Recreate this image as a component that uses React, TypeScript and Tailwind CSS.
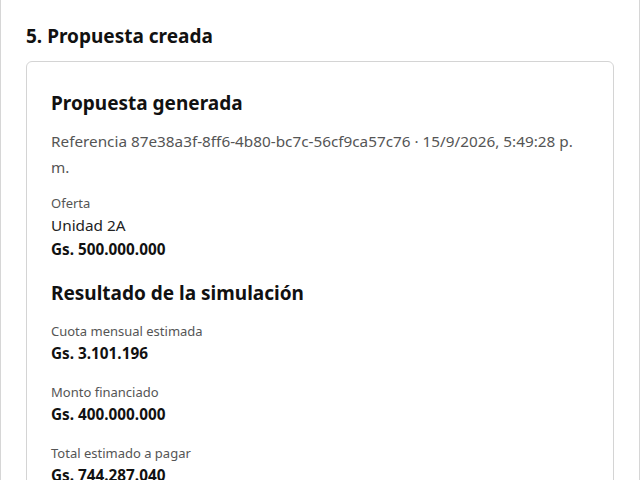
const Field = ({ label, value }: { label: string; value: string }) => (
  <div className="flex flex-col">
    <span className="text-[13px] leading-[20px] text-[#555]">{label}</span>
    <span className="text-[15.3px] leading-[24px] font-bold text-[#111]">{value}</span>
  </div>
);

export default function App() {
  return (
    <div
      className="min-h-[480px] bg-white border-x border-[#d6d6d6] px-[25px] pt-[22px]"
      style={{ fontFamily: '"Noto Sans", "Open Sans", sans-serif' }}
    >
      <h1 className="text-[19px] leading-[28px] font-bold text-[#111]">5. Propuesta creada</h1>

      <div className="mt-[11px] rounded-md border border-[#d4d4d4] px-[24px] pt-[27px] pb-6">
        <h2 className="text-[19px] leading-[28px] font-bold text-[#111]">Propuesta generada</h2>
        <p className="mt-[11px] text-[15.3px] leading-[26px] text-[#555]">
          Referencia 87e38a3f-8ff6-4b80-bc7c-56cf9ca57c76 · 15/9/2026, 5:49:28 p. m.
        </p>

        <div className="mt-[13px] flex flex-col">
          <span className="text-[13px] leading-[20px] text-[#555]">Oferta</span>
          <span className="text-[15.3px] leading-[24px] text-[#222]">Unidad 2A</span>
          <span className="text-[15.3px] leading-[24px] font-bold text-[#111]">Gs. 500.000.000</span>
        </div>

        <h2 className="mt-[18px] text-[19px] leading-[28px] font-bold text-[#111]">
          Resultado de la simulación
        </h2>

        <div className="mt-[14px] flex flex-col gap-[17px]">
          <Field label="Cuota mensual estimada" value="Gs. 3.101.196" />
          <Field label="Monto financiado" value="Gs. 400.000.000" />
          <Field label="Total estimado a pagar" value="Gs. 744.287.040" />
        </div>
      </div>
    </div>
  );
}
